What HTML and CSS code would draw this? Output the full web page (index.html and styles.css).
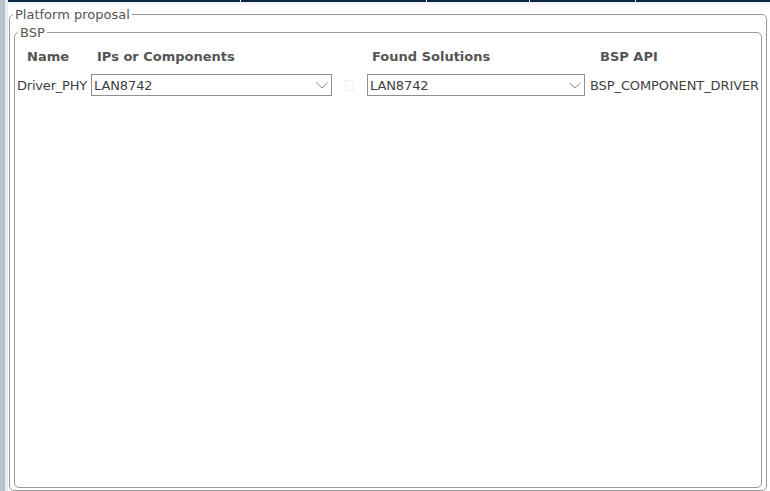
FILE: index.html
```html
<!DOCTYPE html>
<html>
<head>
<meta charset="utf-8">
<link rel="stylesheet" href="styles.css">
</head>
<body>
<div class="app">
  <div class="side"><div class="side-dark"></div><div class="side-light"></div></div>
  <div class="main">
    <div class="topbar">
      <div class="tab t1"></div><div class="tab t2"></div><div class="tab t3"></div><div class="tab t4"></div><div class="tab t5"></div>
    </div>
    <fieldset class="outer">
      <legend>Platform proposal</legend>
      <fieldset class="inner">
        <legend>BSP</legend>
        <div class="grid">
          <div class="hd h-name">Name</div>
          <div class="hd h-ip">IPs or Components</div>
          <div class="hd"></div>
          <div class="hd h-found">Found Solutions</div>
          <div class="hd h-api">BSP API</div>

          <div class="cell c-name">Driver_PHY</div>
          <div class="cell"><div class="select"><span>LAN8742</span><svg class="chev" width="12" height="7" viewBox="0 0 12 7"><path d="M0.5 0.8 L6 6 L11.5 0.8" fill="none" stroke="#8a8a8a" stroke-width="1"/></svg></div></div>
          <div class="cell c-check"><div class="check"></div></div>
          <div class="cell"><div class="select"><span>LAN8742</span><svg class="chev" width="12" height="7" viewBox="0 0 12 7"><path d="M0.5 0.8 L6 6 L11.5 0.8" fill="none" stroke="#8a8a8a" stroke-width="1"/></svg></div></div>
          <div class="cell c-api">BSP_COMPONENT_DRIVER</div>
        </div>
      </fieldset>
    </fieldset>
  </div>
</div>
</body>
</html>
```

FILE: styles.css
```css
html, body {
  margin: 0;
  padding: 0;
  background: #ffffff;
}
body {
  font-family: "DejaVu Sans", "Liberation Sans", sans-serif;
  font-size: 13px;
  color: #3f3f3f;
}
.app {
  display: grid;
  grid-template-columns: 8px 1fr;
  width: 770px;
  height: 491px;
  overflow: hidden;
}
.side {
  display: flex;
}
.side-dark {
  width: 5px;
  background: #b7c3cb;
}
.side-light {
  width: 3px;
  background: #e8edf0;
}
.main {
  display: flex;
  flex-direction: column;
  min-width: 0;
}
.topbar {
  height: 2px;
  border-bottom: 3px solid #f3f5f7;
  display: flex;
  gap: 1px;
  background: #ffffff;
}
.tab {
  background: #0c2444;
  height: 2px;
}
.t1 { width: 232px; }
.t2 { width: 185px; }
.t3 { width: 102px; }
.t4 { width: 105px; }
.t5 { flex: 1; }

fieldset {
  border: 1px solid #9a9a9a;
  border-radius: 5px;
  padding: 0;
  min-width: 0;
}
legend {
  color: #555555;
  font-size: 13px;
  line-height: 15px;
  padding: 0 2px;
  margin-left: 3px;
}
.outer {
  margin: 2px 3px 0 1px;
  flex: 1;
  display: flex;
  flex-direction: column;
}
.inner {
  margin: 3px 4px 2px 4px;
  flex: 1;
}
.inner legend {
  margin-left: 3px;
}
.grid {
  display: grid;
  grid-template-columns: 76px 241px 35px 218px 1fr;
  grid-template-rows: 33px 22px;
  row-gap: 1px;
  align-items: center;
}
.hd {
  font-weight: bold;
  color: #555555;
  white-space: nowrap;
  align-self: center;
}
.h-name { padding-left: 12px; }
.h-ip { padding-left: 6px; }
.h-found { padding-left: 5px; }
.h-api { padding-left: 15px; }
.cell {
  white-space: nowrap;
  letter-spacing: -0.1px;
}
.c-name { padding-left: 2px; letter-spacing: -0.2px; }
.c-api { padding-left: 5px; }
.select {
  box-sizing: border-box;
  height: 22px;
  border: 1px solid #8f8f8f;
  background: #ffffff;
  display: flex;
  align-items: center;
  justify-content: space-between;
  padding: 0 3px 0 2px;
}
.chev {
  display: block;
}
.c-check {
  display: flex;
  justify-content: center;
}
.check {
  width: 9px;
  height: 11px;
  border: 1px solid #f0f0f0;
  box-sizing: border-box;
  margin-left: -1px;
}
```
